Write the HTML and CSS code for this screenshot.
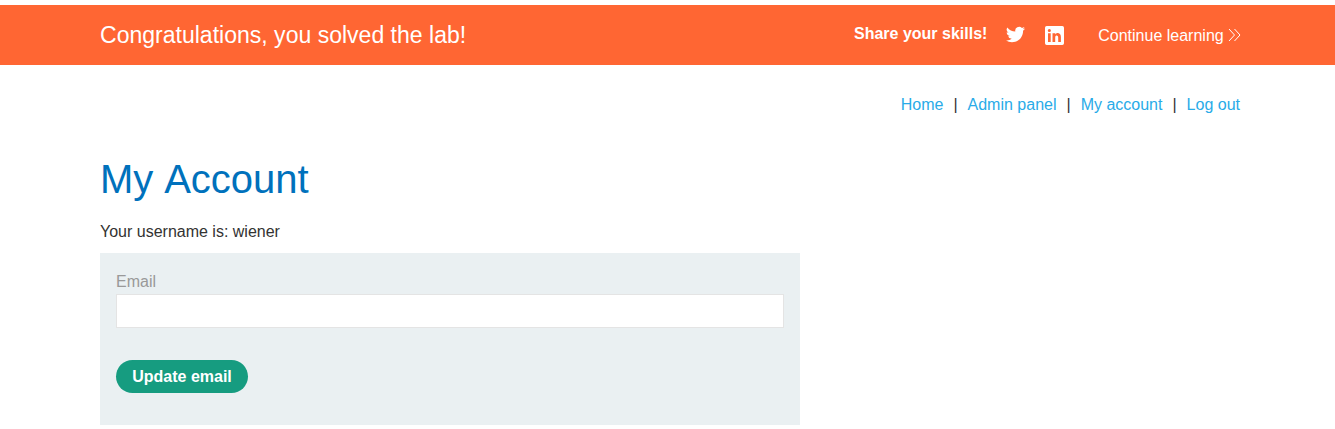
FILE: index.html
```html
<!DOCTYPE html>
<html lang="en">
<head>
<meta charset="utf-8">
<title>My Account</title>
<link rel="stylesheet" href="styles.css">
</head>
<body>
<header class="banner">
  <div class="container banner-row">
    <h4 class="banner-title">Congratulations, you solved the lab!</h4>
    <div class="share">
      <span class="share-label">Share your skills!</span>
      <svg class="twitter" viewBox="0 0 24 24" aria-label="Twitter"><path d="M23.95 4.57a10 10 0 0 1-2.82.77 4.96 4.96 0 0 0 2.16-2.72c-.95.55-2 .95-3.13 1.18a4.92 4.92 0 0 0-8.38 4.48A13.93 13.93 0 0 1 1.64 3.16a4.92 4.92 0 0 0 1.52 6.57 4.9 4.9 0 0 1-2.23-.61v.06a4.92 4.92 0 0 0 3.95 4.83 5 5 0 0 1-2.21.08 4.94 4.94 0 0 0 4.6 3.42A9.87 9.87 0 0 1 0 19.54a13.99 13.99 0 0 0 7.55 2.21c9.05 0 14-7.5 14-13.98 0-.21 0-.42-.02-.63a9.94 9.94 0 0 0 2.46-2.55z"/></svg>
      <svg class="linkedin" viewBox="0 0 19 19" aria-label="LinkedIn"><path fill-rule="evenodd" d="M1.7 0h15.6A1.7 1.7 0 0 1 19 1.7v15.6a1.7 1.7 0 0 1-1.7 1.7H1.7A1.7 1.7 0 0 1 0 17.3V1.7A1.7 1.7 0 0 1 1.7 0zM3 7.2v8.7h2.7V7.2zM4.35 3a1.55 1.55 0 1 0 0 3.1 1.55 1.55 0 0 0 0-3.1zM7.5 7.2v8.7h2.7v-4.4c0-2.7 3-2.5 3 0v4.4h2.7v-5c0-4.4-4.5-4.7-5.7-2.3V7.2z"/></svg>
    </div>
    <a class="continue" href="#">Continue learning<svg class="chevrons" viewBox="0 0 13 14"><path d="M1 1l5.5 6L1 13M6.5 1L12 7l-5.5 6"/></svg></a>
  </div>
</header>
<main class="container">
  <nav class="nav">
    <a href="#">Home</a><span>|</span><a href="#">Admin panel</a><span>|</span><a href="#">My account</a><span>|</span><a href="#">Log out</a>
  </nav>
  <h1 class="title">My Account</h1>
  <p class="username">Your username is: wiener</p>
  <form class="login-form">
    <label class="label" for="email">Email</label>
    <input class="field" id="email" type="email">
    <button class="button" type="button">Update email</button>
  </form>
</main>
</body>
</html>
```
FILE: styles.css
```css
* { box-sizing: border-box; }
body { margin: 0; padding-top: 5px; height: 429px; overflow: hidden; background: #fff; color: #333332; font: 16px/20px "Liberation Sans", Arial, sans-serif; }
a { text-decoration: none; }
.container { width: 1140px; margin-left: 100px; }
.banner { height: 60px; background: #ff6633; color: #fff; }
.banner-row { display: flex; height: 60px; align-items: center; }
.banner-title { margin: 0 auto 0 0; font-size: 23.04px; font-weight: 400; line-height: 28px; }
.share { display: flex; align-items: center; margin-right: 34.4px; }
.share-label { font-weight: 700; margin: -2px 18.5px 0 0; }
.share svg { fill: #fff; }
.twitter { width: 19px; height: 19px; margin: -1px 20px 0 0; }
.linkedin { width: 19px; height: 19px; }
.continue { display: flex; align-items: center; margin: 1px -0.7px 0 0; color: #fff; }
.chevrons { width: 13px; height: 14px; margin: -1px 0 0 4px; fill: none; stroke: #fff; stroke-width: 1; }
.nav { display: flex; justify-content: flex-end; gap: 10px; padding-top: 30px; }
.nav a { color: #29abe8; }
.title { margin: 41px 0 0; color: #0071bc; font-size: 40px; font-weight: 400; line-height: 46px; word-spacing: 1.9px; }
.username { margin: 20px 0 11px; }
.login-form { width: 700px; height: 172px; padding: 19px 16px; background: #eaf0f2; }
.label { display: block; color: #999; }
.field { display: block; width: 668px; height: 34px; margin: 2px 0 32px; border: 1px solid #e4e4e4; background: #fff; }
.button { display: block; width: 132px; height: 33px; padding: 0; border: 0; border-radius: 17px; background: #169c80; color: #fff; font: 700 16px "Liberation Sans", Arial, sans-serif; }
```
